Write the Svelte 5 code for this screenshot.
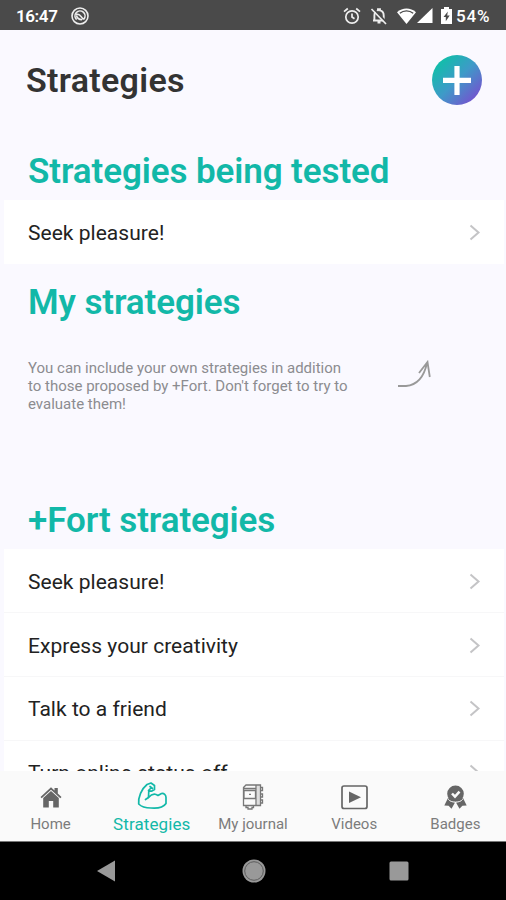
<script lang="ts">
  const tested = ['Seek pleasure!'];

  const strategies = [
    'Seek pleasure!',
    'Express your creativity',
    'Talk to a friend',
    'Turn online status off'
  ];

  const tabs = [
    { id: 'home', label: 'Home' },
    { id: 'strategies', label: 'Strategies' },
    { id: 'journal', label: 'My journal' },
    { id: 'videos', label: 'Videos' },
    { id: 'badges', label: 'Badges' }
  ];

  let active = $state('strategies');
</script>

{#snippet row(label: string)}
  <li class="row">
    <span>{label}</span>
    <svg class="chevron" width="12" height="18" viewBox="0 0 12 18">
      <path d="M1.5 1.5l8 7-8 7" />
    </svg>
  </li>
{/snippet}

<div class="phone">
  <div class="status-bar">
    <span class="time">16:47</span>
    <svg class="status-app" width="18" height="18" viewBox="0 0 18 18" fill="none" stroke="#eee">
      <circle cx="9" cy="9" r="8" stroke-width="1.6" />
      <path d="M5.6 12.6A5 5 0 1 1 12.8 12.2M5 7.5c2.5-1 4 .5 7.5 5M5.5 8.5c.5 2.5 2.5 4 5.5 4.2" stroke-width="1.6" />
    </svg>
    <svg class="alarm" width="18" height="18" viewBox="0 0 18 18" fill="none" stroke="#eee" stroke-width="1.7">
      <circle cx="9" cy="10" r="6.2" />
      <path d="M9 6.5V10l2.5 1.8M1 4.7L4.8 1.5M17 4.7l-3.8-3.2" />
    </svg>
    <svg class="muted" width="18" height="18" viewBox="0 0 18 18">
      <path d="M4.4 13V8.5C4.4 5.8 6 4 8 3.4V2.2h2v1.2c2.2.6 3.7 2.4 3.7 5V13M3 13.5h12M7.5 15.5h3" fill="none" stroke="#eee" stroke-width="1.9" />
      <path d="M3 1l14 15" stroke="#4a4a4a" stroke-width="2" />
      <path d="M1.5 2l14.5 15" stroke="#eee" stroke-width="1.7" />
    </svg>
    <svg class="wifi" width="19" height="16" viewBox="0 0 19 16">
      <path d="M0 4.2C5.5-.8 13.5-.8 19 4.2L9.5 16z" fill="#fff" />
      <path d="M2.8 5.2c4-3.2 9.4-3.2 13.4 0" stroke="#4a4a4a" stroke-width="1.3" fill="none" />
    </svg>
    <svg class="signal" width="16" height="15" viewBox="0 0 16 15">
      <path d="M15.5 0v15H0z" fill="#fff" />
    </svg>
    <svg class="battery" width="11" height="17" viewBox="0 0 11 17">
      <path d="M3 0h5v2h3v15H0V2h3z" fill="#fff" />
      <path d="M6.8 4.5L2.5 10h2.3v4.2L8.7 8.5H6.2z" fill="#4a4a4a" />
    </svg>
    <span class="percent">54%</span>
  </div>

  <main class="content">
    <header class="header">
      <h1>Strategies</h1>
      <button class="add" aria-label="Add strategy">
        <svg width="50" height="50" viewBox="0 0 50 50">
          <path d="M25 11v29M11 25.3h28" stroke="#fff" stroke-width="5.2" />
        </svg>
      </button>
    </header>

    <h2 class="first">Strategies being tested</h2>
    <ul class="list">
      {#each tested as label}
        {@render row(label)}
      {/each}
    </ul>

    <h2 class="mine">My strategies</h2>
    <div class="empty">
      <p>
        You can include your own strategies in addition<br />
        to those proposed by +Fort. Don't forget to try to<br />
        evaluate them!
      </p>
      <svg class="arrow" width="35" height="28" viewBox="0 0 35 28">
        <path d="M1 26h8c11-1 18-9 21-23M22 13L30.5 2l2.3 15" />
      </svg>
    </div>

    <h2 class="fort">+Fort strategies</h2>
    <ul class="list">
      {#each strategies as label}
        {@render row(label)}
      {/each}
    </ul>
  </main>

  <nav class="tab-bar">
    {#each tabs as tab}
      <button class="tab" class:active={active === tab.id} onclick={() => (active = tab.id)}>
        <span class="tab-icon">
          {#if tab.id === 'home'}
            <svg width="22" height="22" viewBox="0 0 22 22" fill="#666">
              <path d="M.5 11L11 1.2l3.5 3.2V2h3.3v5.5l3.7 3.5-1.2 1.2L11 3.8 1.7 12.2z" />
              <path d="M3.200 12L11 5l7.800 7v9.500h-5.600V15H8.800v6.500H3.200z" />
            </svg>
          {:else if tab.id === 'strategies'}
            <svg class="arm" width="30" height="28" viewBox="0 0 30 28" fill="none" stroke="currentColor" stroke-width="1.7" stroke-linejoin="round" stroke-linecap="round">
              <path d="M10 2.5l4-1.5 3.500 2.500v4l-3 1.700-2.700-.7-.3 7c3-3.500 6-4.500 9.500-2l3.500-2c2.500-.5 4.500 1.500 4.500 4v6c-3 4.500-9 5-15 4.500-4 0-9-.5-12.300-4C1 15 4.500 7 10 2.500z" />
              <path d="M8.500 17.500l3-2M13 4.500l2.500 2M11.500 8.500l2-2" />
            </svg>
          {:else if tab.id === 'journal'}
            <svg width="22" height="26" viewBox="0 0 22 26" fill="none" stroke="#777" stroke-width="1.3">
              <path d="M14.500 1.500h4v20h-4z" fill="#ddd" stroke="none" />
              <path d="M1.500 3.500L4 1h14.500v20.500h-17zM1.500 4.500h12.500M14 1v20.500M2 6.500h11.500v8H2zM7 10.300h2M4 21.500v2h2V25h4v-1.500h1.500v-2" />
              <path d="M18.500 3.500h2v3h-2M18.500 10h2v3h-2M18.500 16h2v3h-2" />
            </svg>
          {:else if tab.id === 'videos'}
            <svg width="27" height="25" viewBox="0 0 27 25">
              <rect x="1" y="1" width="25" height="22.5" rx="2" fill="none" stroke="#666" stroke-width="1.7" />
              <path d="M8 6.500v11.500l12-5.800z" fill="#666" />
            </svg>
          {:else}
            <svg width="23" height="24" viewBox="0 0 23 24" fill="#666">
              <path d="M4 13L.3 20.500l4.300.3L7.500 23.800l3.500-6.300zM19 13l3.700 7.500-4.300.3-2.900 3-3.500-6.300z" />
              <circle cx="11.5" cy="8.8" r="8.3" />
              <path d="M4.300 14.300c2.500 3.800 11.900 3.800 14.400 0" fill="none" stroke="#fafafa" stroke-width="1" />
              <path d="M8 8.500l3 3.200 4.500-5" fill="none" stroke="#fafafa" stroke-width="2.5" />
            </svg>
          {/if}
        </span>
        <span class="tab-label">{tab.label}</span>
      </button>
    {/each}
  </nav>

  <div class="system-nav">
    <svg width="18" height="22" viewBox="0 0 18 22"><path d="M18 .5v21L0 11z" fill="#999" /></svg>
    <svg class="home-key" width="24" height="24" viewBox="0 0 24 24">
      <circle cx="12" cy="12" r="11.5" fill="#999" />
      <circle cx="12" cy="12" r="9.3" fill="none" stroke="#5c5c5c" stroke-width="1" />
    </svg>
    <svg width="20" height="20" viewBox="0 0 20 20"><rect x=".5" y=".5" width="19" height="19" rx="1.5" fill="#999" /></svg>
  </div>
</div>

<style>
  :global(body) {
    margin: 0;
  }

  .phone {
    width: 506px;
    height: 900px;
    display: flex;
    flex-direction: column;
    overflow: hidden;
    background: #faf9ff;
    font-family: Roboto, sans-serif;
  }

  .status-bar {
    flex: none;
    box-sizing: border-box;
    height: 30px;
    padding: 1px 14px 0 16px;
    display: flex;
    align-items: center;
    background: #4a4a4a;
    color: #fff;
    font-size: 17px;
    font-weight: 500;
  }

  .time {
    width: 55px;
    letter-spacing: -0.4px;
    font-weight: 600;
  }

  .alarm {
    margin-left: auto;
  }

  .muted {
    margin-left: 9px;
  }

  .wifi {
    margin-left: 9px;
  }

  .signal {
    margin-left: 1px;
  }

  .battery {
    margin: 0 4px 0 8px;
  }

  .percent {
    width: 36px;
    letter-spacing: 0.8px;
    white-space: nowrap;
  }

  .content {
    flex: 1;
    min-height: 0;
    overflow: hidden;
  }

  .header {
    height: 100px;
    padding: 0 24px 0 26px;
    display: flex;
    align-items: center;
    justify-content: space-between;
  }

  h1 {
    margin: 0;
    font-size: 34px;
    font-weight: 600;
    letter-spacing: 0.3px;
    color: #333;
  }

  .add {
    width: 50px;
    height: 50px;
    padding: 0;
    border: none;
    border-radius: 50%;
    background: linear-gradient(135deg, #0fc0a8 12%, #3e9ac8 50%, #7650cf 90%);
  }

  .add svg {
    display: block;
  }

  h2 {
    margin: 0 28px;
    line-height: 40px;
    font-size: 35px;
    font-weight: 600;
    letter-spacing: -0.1px;
    color: #12b8a8;
  }

  .first {
    padding: 22px 0 8px;
  }

  .mine {
    padding: 19px 0 36px;
  }

  .fort {
    padding: 1px 0 8px;
  }

  .list {
    margin: 0 2px 0 4px;
    padding: 0;
    list-style: none;
    background: #fff;
  }

  .row {
    box-sizing: border-box;
    height: 63.7px;
    padding: 2px 23px 0 24px;
    display: flex;
    align-items: center;
    justify-content: space-between;
    font-size: 21px;
    letter-spacing: 0.03px;
    color: #222;
  }

  .row + .row {
    border-top: 1px solid #f7f7f8;
  }

  .chevron path {
    fill: none;
    stroke: #c4c4c6;
    stroke-width: 2;
  }

  .empty {
    height: 141px;
    padding: 0 74px 0 28px;
    display: flex;
    align-items: flex-start;
    justify-content: space-between;
  }

  .empty p {
    margin: 0;
    font-size: 15px;
    line-height: 18px;
    color: #8c8c90;
    white-space: nowrap;
  }

  .arrow {
    margin-top: 1px;
    fill: none;
    stroke: #999;
    stroke-width: 1.8;
  }

  .tab-bar {
    flex: none;
    box-sizing: border-box;
    height: 70px;
    padding-bottom: 8px;
    display: grid;
    grid-template-columns: repeat(5, 1fr);
    background: #fafafa;
  }

  .tab {
    padding: 0;
    border: none;
    background: none;
    display: flex;
    flex-direction: column;
    align-items: center;
    justify-content: flex-start;
    font-family: inherit;
    font-size: 15px;
    color: #7c7c7c;
  }

  .tab-icon {
    height: 44px;
    padding-top: 8px;
    box-sizing: border-box;
    display: flex;
    align-items: center;
  }

  .tab-label {
    line-height: 18px;
    white-space: nowrap;
  }

  .tab.active {
    font-size: 17px;
    color: #12b8a8;
  }

  .tab.active .tab-label {
    letter-spacing: 0.1px;
  }

  .arm {
    margin-top: -3px;
  }

  .system-nav {
    flex: none;
    box-sizing: border-box;
    height: 59px;
    padding: 0 97px;
    display: flex;
    align-items: center;
    justify-content: space-between;
    background: #000;
    border-top: 1px solid #777;
  }

  .home-key {
    margin-left: 3px;
  }
</style>
